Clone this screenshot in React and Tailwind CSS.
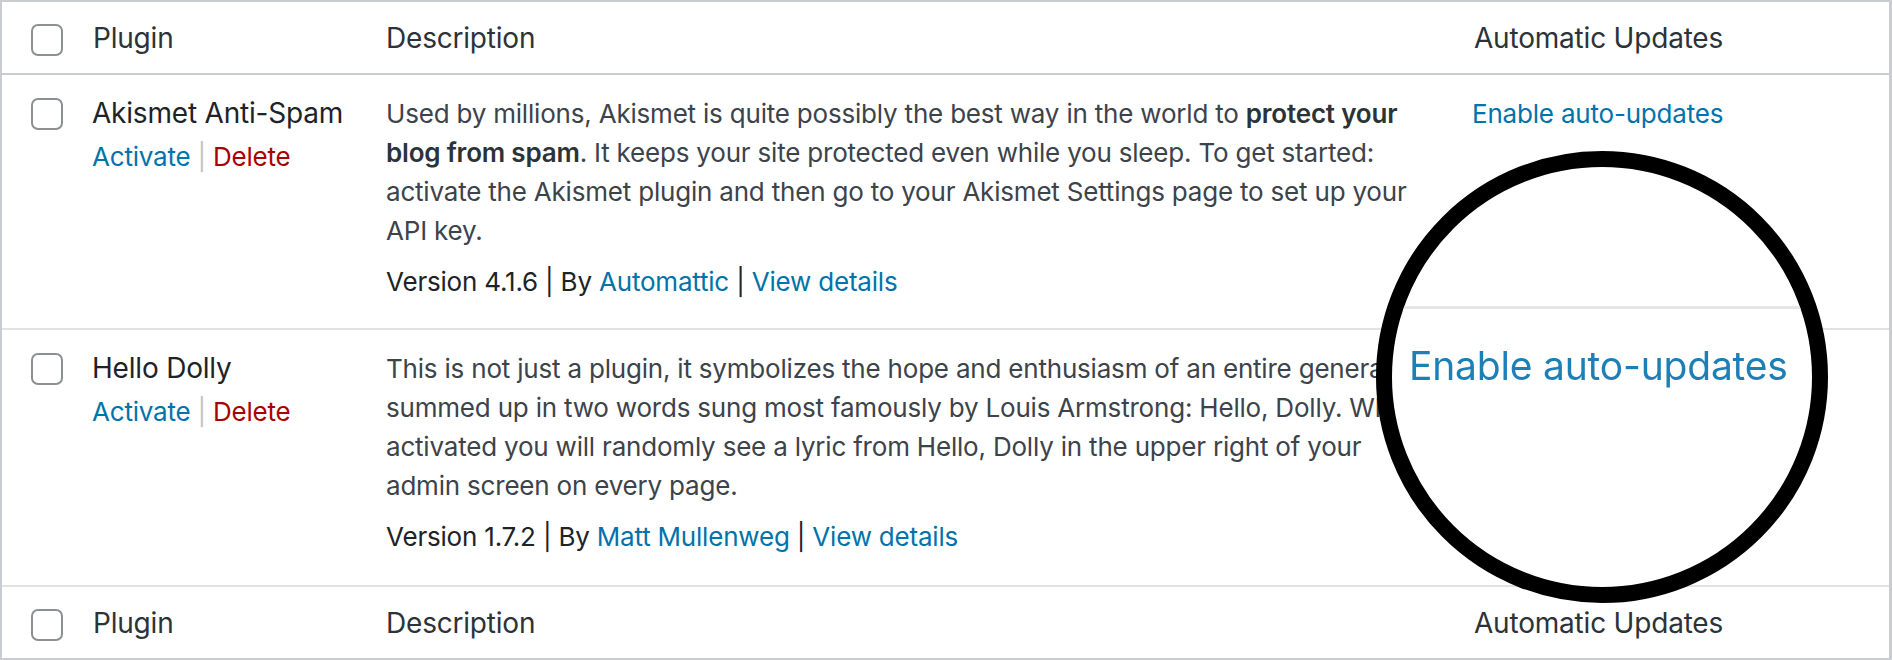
import React from 'react';

const plugins = [
  {
    name: 'Akismet Anti-Spam',
    desc: (
      <>
        Used by millions, Akismet is quite possibly the best way in the world to{' '}
        <strong className="font-semibold text-[#2c3338]">protect your blog from spam</strong>. It keeps your site
        protected even while you sleep. To get started: activate the Akismet plugin and then go to your Akismet
        Settings page to set up your API key.
      </>
    ),
    version: '4.1.6',
    author: 'Automattic',
    height: 'h-[255px]',
  },
  {
    name: 'Hello Dolly',
    desc: 'This is not just a plugin, it symbolizes the hope and enthusiasm of an entire generation summed up in two words sung most famously by Louis Armstrong: Hello, Dolly. When activated you will randomly see a lyric from Hello, Dolly in the upper right of your admin screen on every page.',
    version: '1.7.2',
    author: 'Matt Mullenweg',
    height: 'h-[257px]',
  },
];

const Checkbox = () => (
  <span className="block h-[32px] w-[32px] rounded-[7px] border-2 border-[#8c8f94] bg-white" />
);

const cols = 'grid grid-cols-[73px_293px_1089px_1fr]';

const HeadRow = ({ className }) => (
  <div className={`${cols} items-center text-[28px] text-[#2c3338] ${className}`}>
    <div className="pl-[29px] pt-[4px]">
      <Checkbox />
    </div>
    <div className="pl-[18px]">Plugin</div>
    <div className="pl-[18px]">Description</div>
    <div className="pl-[17px]">Automatic Updates</div>
  </div>
);

const PluginRow = ({ plugin }) => (
  <div className={`${cols} ${plugin.height} border-b-2 border-[#e1e2e4]`}>
    <div className="pl-[29px] pt-[23px]">
      <Checkbox />
    </div>
    <div className="pl-[17px] pt-[15px]">
      <p className="text-[28px] leading-[47px] text-[#1d2327]">{plugin.name}</p>
      <p className="text-[26px] leading-[39px]">
        <a className="text-[#0073aa]">Activate</a>
        <span className="px-[7px] text-[#c3c4c7]">|</span>
        <a className="text-[#a00]">Delete</a>
      </p>
    </div>
    <div className="pl-[18px] pr-[18px] pt-[19px] text-[26px] leading-[39px]">
      <p className="text-[#3c434a]">{plugin.desc}</p>
      <p className="mt-[12px] text-[#1d2327]">
        Version {plugin.version} | By <a className="text-[#0073aa]">{plugin.author}</a> |{' '}
        <a className="text-[#0073aa]">View details</a>
      </p>
    </div>
    <div className="pl-[15px] pt-[19px] text-[26px] leading-[39px]">
      <a className="text-[#0073aa]">Enable auto-updates</a>
    </div>
  </div>
);

export default function App() {
  return (
    <div className="relative flex h-[660px] w-[1892px] flex-col overflow-hidden border-2 border-r-[3px] border-[#c9ccd0] bg-white font-[family-name:Inter,sans-serif] tracking-[-0.2px]">
      <HeadRow className="h-[73px] border-b-2 border-[#c9ccd0]" />
      {plugins.map((p) => (
        <PluginRow key={p.name} plugin={p} />
      ))}
      <HeadRow className="flex-1" />

      {/* magnifier */}
      <div className="absolute left-[1374px] top-[149px] h-[452px] w-[452px] overflow-hidden rounded-full border-[16px] border-black bg-white">
        <div className="absolute left-0 right-0 top-[139px] h-[3px] bg-[#e6e6e6]" />
        <div className="absolute left-[17px] top-[177px] whitespace-nowrap text-[39px] leading-[44px] text-[#1e7fb6] blur-[0.4px]">
          Enable auto-updates
        </div>
      </div>
    </div>
  );
}
